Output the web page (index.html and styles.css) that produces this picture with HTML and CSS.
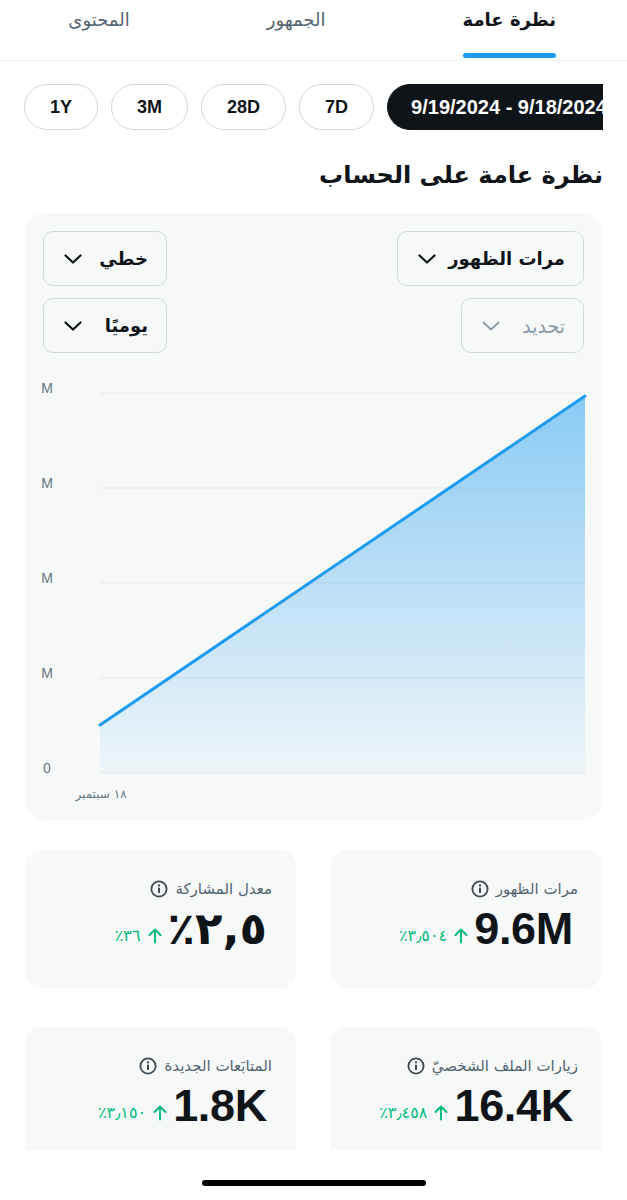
FILE: index.html
```html
<!DOCTYPE html>
<html lang="ar" dir="rtl">
<head>
<meta charset="utf-8">
<title>نظرة عامة</title>
<link rel="stylesheet" href="styles.css">
</head>
<body>
<nav class="tabs">
  <div class="tab active"><div class="tab-inner"><span class="tab-label">نظرة عامة</span><span class="tab-bar"></span></div></div>
  <div class="tab"><div class="tab-inner"><span class="tab-label">الجمهور</span></div></div>
  <div class="tab"><div class="tab-inner"><span class="tab-label">المحتوى</span></div></div>
</nav>

<div class="ranges">
  <div class="pill">1Y</div>
  <div class="pill">3M</div>
  <div class="pill">28D</div>
  <div class="pill">7D</div>
  <div class="pill dark">9/19/2024 - 9/18/2024</div>
</div>

<h1 class="title">نظرة عامة على الحساب</h1>

<section class="chart-card">
  <div class="controls">
    <div class="ctrl-col">
      <div class="dd"><span>مرات الظهور</span><svg class="chev" viewBox="0 0 18 10"><polyline points="1.5,1.5 9,8.5 16.5,1.5"/></svg></div>
      <div class="dd muted"><span>تحديد</span><svg class="chev" viewBox="0 0 18 10"><polyline points="1.5,1.5 9,8.5 16.5,1.5"/></svg></div>
    </div>
    <div class="ctrl-col narrow">
      <div class="dd"><span>خطي</span><svg class="chev" viewBox="0 0 18 10"><polyline points="1.5,1.5 9,8.5 16.5,1.5"/></svg></div>
      <div class="dd"><span>يوميًا</span><svg class="chev" viewBox="0 0 18 10"><polyline points="1.5,1.5 9,8.5 16.5,1.5"/></svg></div>
    </div>
  </div>
  <svg class="chart" viewBox="0 0 577 440" width="577" height="440">
    <defs>
      <linearGradient id="fill" x1="0" y1="0" x2="0" y2="1">
        <stop offset="0" stop-color="#1d9bf0" stop-opacity="0.5"/>
        <stop offset="1" stop-color="#1d9bf0" stop-opacity="0.04"/>
      </linearGradient>
    </defs>
    <g class="grid">
      <line x1="75" y1="28" x2="560" y2="28"/>
      <line x1="75" y1="123" x2="560" y2="123"/>
      <line x1="75" y1="218" x2="560" y2="218"/>
      <line x1="75" y1="313" x2="560" y2="313"/>
      <line x1="75" y1="408" x2="560" y2="408"/>
    </g>
    <polygon points="75,360 560,31 560,408 75,408" fill="url(#fill)"/>
    <line x1="75" y1="360" x2="560" y2="31" class="trend"/>
    <g class="ylabels">
      <text x="22" y="28">M</text>
      <text x="22" y="123">M</text>
      <text x="22" y="218">M</text>
      <text x="22" y="313">M</text>
      <text x="22" y="408">0</text>
    </g>
    <text class="xlabel" x="76" y="433">١٨ سبتمبر</text>
  </svg>
</section>

<div class="stats">
  <div class="stat">
    <div class="stat-label"><span>مرات الظهور</span><svg class="info" viewBox="0 0 18 18"><circle cx="9" cy="9" r="7.6"/><rect x="8" y="7.6" width="2" height="5.4" rx="0.6"/><circle cx="9" cy="5.4" r="1.15" class="dot"/></svg></div>
    <div class="stat-value"><span class="num">9.6M</span><span class="delta"><svg class="up" viewBox="0 0 14 16"><path d="M7 15V2M1.5 7.5L7 2l5.5 5.5"/></svg><span>٣٫٥٠٤٪</span></span></div>
  </div>
  <div class="stat">
    <div class="stat-label"><span>معدل المشاركة</span><svg class="info" viewBox="0 0 18 18"><circle cx="9" cy="9" r="7.6"/><rect x="8" y="7.6" width="2" height="5.4" rx="0.6"/><circle cx="9" cy="5.4" r="1.15" class="dot"/></svg></div>
    <div class="stat-value"><span class="num ar">٢,٥٪</span><span class="delta"><svg class="up" viewBox="0 0 14 16"><path d="M7 15V2M1.5 7.5L7 2l5.5 5.5"/></svg><span>٣٦٪</span></span></div>
  </div>
  <div class="stat">
    <div class="stat-label"><span>زيارات الملف الشخصيّ</span><svg class="info" viewBox="0 0 18 18"><circle cx="9" cy="9" r="7.6"/><rect x="8" y="7.6" width="2" height="5.4" rx="0.6"/><circle cx="9" cy="5.4" r="1.15" class="dot"/></svg></div>
    <div class="stat-value"><span class="num">16.4K</span><span class="delta"><svg class="up" viewBox="0 0 14 16"><path d="M7 15V2M1.5 7.5L7 2l5.5 5.5"/></svg><span>٣٫٤٥٨٪</span></span></div>
  </div>
  <div class="stat">
    <div class="stat-label"><span>المتابَعات الجديدة</span><svg class="info" viewBox="0 0 18 18"><circle cx="9" cy="9" r="7.6"/><rect x="8" y="7.6" width="2" height="5.4" rx="0.6"/><circle cx="9" cy="5.4" r="1.15" class="dot"/></svg></div>
    <div class="stat-value"><span class="num">1.8K</span><span class="delta"><svg class="up" viewBox="0 0 14 16"><path d="M7 15V2M1.5 7.5L7 2l5.5 5.5"/></svg><span>٣٫١٥٠٪</span></span></div>
  </div>
</div>

<div class="home-area"><div class="home-indicator"></div></div>
</body>
</html>
```
FILE: styles.css
```css
* { box-sizing: border-box; margin: 0; padding: 0; }
html { direction: rtl; }
body {
  width: 627px;
  height: 1200px;
  overflow: hidden;
  background: #fff;
  color: #0f1419;
  font-family: "Liberation Sans", "DejaVu Sans", sans-serif;
}

/* Tabs */
.tabs {
  display: flex;
  height: 61px;
  border-bottom: 1px solid #eff3f4;
}
.tab { padding: 0 69px 0 68px; }
.tab:first-child { padding-right: 71px; }
.tab-inner {
  display: flex;
  flex-direction: column;
  height: 60px;
}
.tab-label {
  font-family: "DejaVu Sans", sans-serif;
  font-size: 18px;
  line-height: 28px;
  padding-top: 6px;
  color: #536471;
  white-space: nowrap;
}
.tab.active .tab-label { font-weight: bold; color: #0f1419; }
.tab-bar {
  margin-top: auto;
  margin-bottom: 2px;
  height: 5px;
  border-radius: 3px;
  background: #1d9bf0;
}

/* Range pills */
.ranges {
  direction: ltr;
  display: flex;
  gap: 13px;
  margin: 23px 24px 0;
  overflow: hidden;
}
.pill {
  flex-shrink: 0;
  height: 46px;
  padding: 0 25px;
  border: 1.5px solid #cfd9de;
  border-radius: 23px;
  display: flex;
  align-items: center;
  font-size: 18px;
  font-weight: bold;
  white-space: nowrap;
}
.pill.dark {
  background: #0f1419;
  border-color: #0f1419;
  color: #fff;
  font-size: 20px;
  padding: 0 24px 0 23px;
}

/* Heading */
.title {
  margin: 28px 24px 0;
  font-family: "DejaVu Sans", sans-serif;
  font-size: 24px;
  line-height: 34px;
  font-weight: bold;
}

/* Chart card */
.chart-card {
  margin: 21px 25px 0;
  padding: 18px 18px 15px;
  background: #f7f9f9;
  border-radius: 20px;
}
.controls {
  display: flex;
  justify-content: space-between;
}
.ctrl-col {
  display: flex;
  flex-direction: column;
  align-items: flex-start;
  gap: 12px;
}
.dd {
  height: 55px;
  padding: 0 18px 0 20px;
  border: 1.5px solid #cfd9de;
  border-radius: 10px;
  display: flex;
  align-items: center;
  gap: 12px;
  font-family: "DejaVu Sans", sans-serif;
  font-size: 18px;
  font-weight: bold;
  white-space: nowrap;
}
.ctrl-col.narrow .dd { width: 124px; justify-content: space-between; }
.dd.muted { color: #8b98a5; font-weight: normal; font-size: 19px; gap: 22px; }
.chev {
  width: 18px;
  height: 10px;
  fill: none;
  stroke: #0f1419;
  stroke-width: 2.2;
  stroke-linecap: round;
  stroke-linejoin: round;
  flex-shrink: 0;
}
.dd.muted .chev { stroke: #8b98a5; stroke-width: 1.8; }

.chart {
  display: block;
  margin: 12px -18px 0;
  overflow: visible;
}
.grid line { stroke: #e6eaec; stroke-width: 1.2; }
.trend { stroke: #1d9bf0; stroke-width: 3; stroke-linecap: round; }
.ylabels text {
  font-family: "Liberation Sans", sans-serif;
  font-size: 14px;
  fill: #66757f;
  text-anchor: middle;
  direction: ltr;
}
.xlabel {
  font-family: "DejaVu Sans", sans-serif;
  font-size: 12px;
  fill: #66757f;
  text-anchor: middle;
}

/* Stats */
.stats {
  display: grid;
  grid-template-columns: 1fr 1fr;
  column-gap: 35px;
  row-gap: 39px;
  margin: 30px 25px 0;
}
.stat {
  height: 138px;
  padding: 28px 24px 0;
  background: #f7f9f9;
  border-radius: 16px;
}
.stat-label {
  display: flex;
  align-items: center;
  gap: 7px;
  font-family: "DejaVu Sans", sans-serif;
  font-size: 15px;
  line-height: 22px;
  color: #536471;
  white-space: nowrap;
}
.info { width: 18px; height: 18px; flex-shrink: 0; }
.info circle { fill: none; stroke: #3d4a54; stroke-width: 1.8; }
.info rect, .info .dot { fill: #3d4a54; stroke: none; }
.stat-value {
  display: flex;
  align-items: baseline;
  gap: 6px;
  margin-top: 5px;
  padding-right: 5px;
}
.num {
  font-size: 45px;
  line-height: 48px;
  font-weight: bold;
  letter-spacing: -0.3px;
  direction: ltr;
}
.num.ar {
  font-family: "DejaVu Sans", sans-serif;
  direction: rtl;
  letter-spacing: 3px;
}
.delta {
  display: flex;
  align-items: center;
  gap: 7px;
  color: #00ba7c;
  font-family: "DejaVu Sans", sans-serif;
  font-size: 16px;
  letter-spacing: 3px;
}
.up {
  width: 14px;
  height: 17px;
  fill: none;
  stroke: #00ba7c;
  stroke-width: 1.9;
  stroke-linecap: round;
  stroke-linejoin: round;
}

/* Home indicator overlay */
.home-area {
  position: fixed;
  left: 0;
  bottom: 0;
  width: 627px;
  height: 50px;
  background: #fff;
  display: flex;
  justify-content: center;
  align-items: flex-end;
  padding-bottom: 14px;
}
.home-indicator {
  width: 224px;
  height: 6px;
  border-radius: 3px;
  background: #000;
}
```
